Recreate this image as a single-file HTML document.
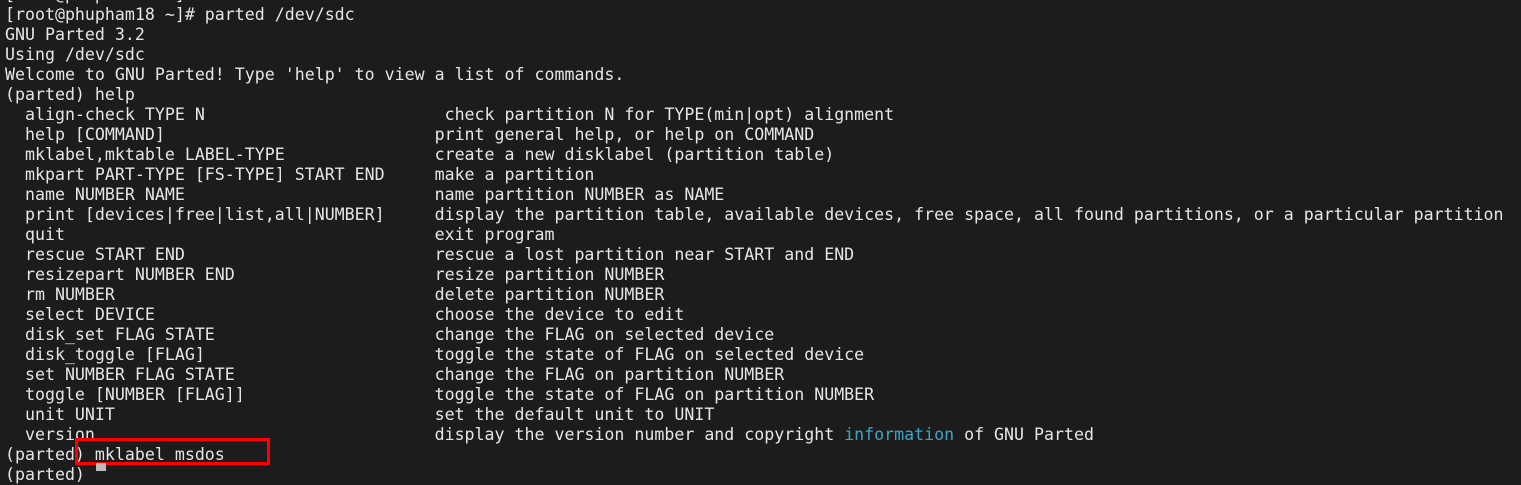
<html><head><style>
body{margin:0;width:1521px;height:469px;background:#1c1c1c;overflow:hidden;position:relative}
pre{position:absolute;left:5px;top:-15px;margin:0;font-family:"DejaVu Sans Mono",monospace;font-size:16.6px;line-height:20px;color:#e6e6e6}
.b{color:#3aa5c8}
.box{position:absolute;left:75px;top:438px;width:189px;height:21px;border:3px solid #f00}
.cur{position:absolute;left:96px;top:463px;width:10px;height:8px;background:#bbb}
</style></head><body>
<pre>[root@phupham18 ~]#
[root@phupham18 ~]# parted /dev/sdc
GNU Parted 3.2
Using /dev/sdc
Welcome to GNU Parted! Type 'help' to view a list of commands.
(parted) help
  align-check TYPE N                        check partition N for TYPE(min|opt) alignment
  help [COMMAND]                           print general help, or help on COMMAND
  mklabel,mktable LABEL-TYPE               create a new disklabel (partition table)
  mkpart PART-TYPE [FS-TYPE] START END     make a partition
  name NUMBER NAME                         name partition NUMBER as NAME
  print [devices|free|list,all|NUMBER]     display the partition table, available devices, free space, all found partitions, or a particular partition
  quit                                     exit program
  rescue START END                         rescue a lost partition near START and END
  resizepart NUMBER END                    resize partition NUMBER
  rm NUMBER                                delete partition NUMBER
  select DEVICE                            choose the device to edit
  disk_set FLAG STATE                      change the FLAG on selected device
  disk_toggle [FLAG]                       toggle the state of FLAG on selected device
  set NUMBER FLAG STATE                    change the FLAG on partition NUMBER
  toggle [NUMBER [FLAG]]                   toggle the state of FLAG on partition NUMBER
  unit UNIT                                set the default unit to UNIT
  version                                  display the version number and copyright <span class="b">information</span> of GNU Parted
(parted) mklabel msdos
(parted) </pre>
<div class="box"></div><div class="cur"></div>
</body></html>
